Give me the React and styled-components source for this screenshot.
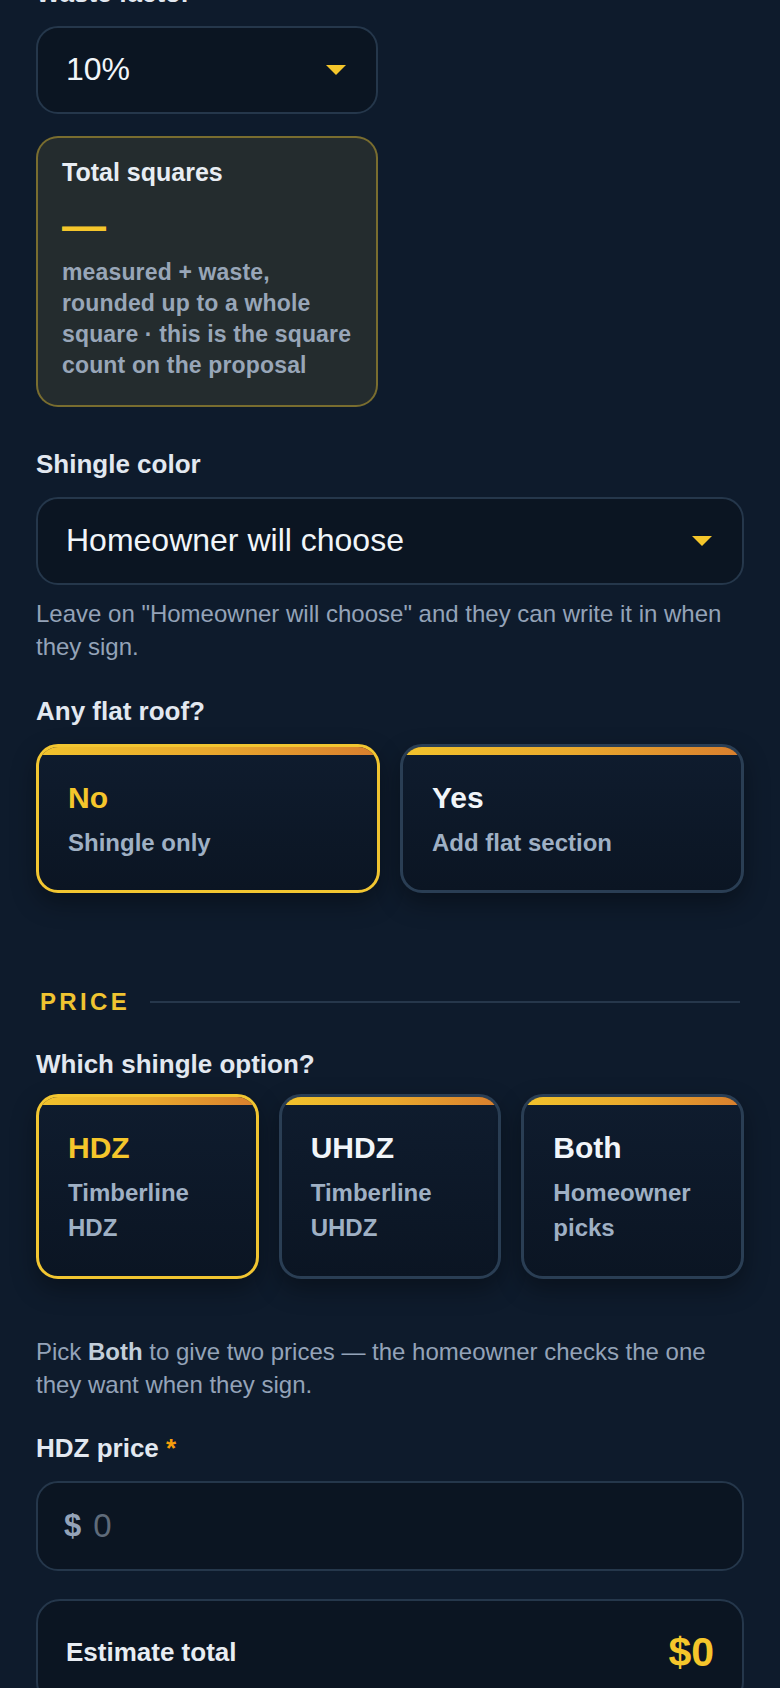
import styled, { createGlobalStyle } from "styled-components";

const GlobalStyle = createGlobalStyle`
  body {
    margin: 0;
    background: #0e1b2c;
    font-family: "Liberation Sans", Arial, sans-serif;
    color: #e2e8f0;
  }
`;

const Page = styled.div`
  margin-top: -24px;
  padding: 0 36px 40px;
`;

const Label = styled.div`
  font-size: 26px;
  font-weight: 700;
  line-height: 34px;
  color: #e2e8f0;
  margin: ${(p) => p.$top || 0}px 0 ${(p) => p.$bottom ?? 16}px;

  span {
    color: #f59e0b;
  }
`;

const HalfGrid = styled.div`
  display: grid;
  grid-template-columns: 1fr 1fr;
  column-gap: 24px;
`;

const Select = styled.div`
  box-sizing: border-box;
  height: 88px;
  display: flex;
  align-items: center;
  justify-content: space-between;
  padding: 0 30px 2px 28px;
  background: #0b1522;
  border: 2px solid #25374b;
  border-radius: 22px;
  font-size: 32px;
  color: #f1f5f9;

  svg {
    margin-top: 2px;
  }
`;

const Caret = () => (
  <svg width="20" height="10" viewBox="0 0 20 10">
    <path d="M0 0h20L10 10z" fill="#f5c62b" />
  </svg>
);

const SummaryCard = styled.div`
  margin-top: 22px;
  padding: 19px 22px 24px 24px;
  border: 2px solid rgba(240, 200, 50, 0.42);
  border-radius: 22px;
  background: #242c2e;
`;

const SummaryTitle = styled.div`
  font-size: 25px;
  font-weight: 700;
  line-height: 31px;
  color: #e8edf3;
`;

const SummaryValue = styled.div`
  margin-top: 16px;
  font-size: 44px;
  font-weight: 700;
  line-height: 44px;
  color: #f5c62b;
`;

const SummaryNote = styled.div`
  margin-top: 9px;
  font-size: 23px;
  font-weight: 700;
  line-height: 31px;
  letter-spacing: 0.15px;
  color: #98a6b8;
`;

const Help = styled.p`
  margin: ${(p) => p.$top}px 0 0;
  font-size: 24px;
  line-height: 33.3px;
  color: #94a3b8;

  b {
    color: #c3ceda;
  }
`;

const OptionGrid = styled.div`
  display: grid;
  grid-template-columns: repeat(${(p) => p.$cols}, 1fr);
  gap: 20px;
`;

const OptionCard = styled.div`
  position: relative;
  overflow: hidden;
  padding: 33px 28px 30px 29px;
  border: 3px solid ${(p) => (p.$active ? "#f2c631" : "#2a3e54")};
  border-radius: 22px;
  background: linear-gradient(180deg, #0f1c2e 0%, #0b1523 100%);
  box-shadow: 0 10px 24px rgba(0, 0, 0, 0.35);

  &::before {
    content: "";
    position: absolute;
    top: 0;
    left: 0;
    right: 0;
    height: 8px;
    background: linear-gradient(90deg, #f1c22c 0%, #e9a92d 50%, #d97f2e 100%);
  }
`;

const OptionTitle = styled.div`
  font-size: 30px;
  font-weight: 700;
  line-height: 36px;
  color: ${(p) => (p.$active ? "#f5c62b" : "#f1f5f9")};
`;

const OptionSub = styled.div`
  margin-top: 10px;
  font-size: 24px;
  font-weight: 700;
  line-height: 34.8px;
  color: #9fb0c4;
`;

const SectionHead = styled.div`
  display: flex;
  align-items: center;
  gap: 20px;
  margin-top: 94px;
  padding: 0 4px;
`;

const SectionTitle = styled.div`
  font-size: 24px;
  font-weight: 700;
  line-height: 30px;
  letter-spacing: 0.14em;
  color: #f0c431;
`;

const SectionRule = styled.div`
  flex: 1;
  height: 2px;
  background: #26374b;
`;

const PriceInput = styled.div`
  box-sizing: border-box;
  height: 90px;
  display: flex;
  align-items: center;
  gap: 12px;
  padding: 0 26px;
  background: #0b1522;
  border: 2px solid #25374b;
  border-radius: 22px;
`;

const Dollar = styled.span`
  font-size: 31px;
  font-weight: 700;
  color: #94a3b8;
`;

const Placeholder = styled.span`
  font-size: 33px;
  color: #5f6b7a;
`;

const TotalCard = styled.div`
  margin-top: 28px;
  padding: 31px 28px 32px 28px;
  background: #0b1522;
  border: 2px solid #25374b;
  border-radius: 24px;
`;

const TotalRow = styled.div`
  display: flex;
  align-items: center;
  justify-content: space-between;
`;

const TotalLabel = styled.div`
  font-size: 26px;
  font-weight: 700;
  line-height: 34px;
  color: #e8edf3;
`;

const TotalValue = styled.div`
  font-size: 41px;
  font-weight: 700;
  line-height: 40px;
  color: #f5c62b;
`;

const flatOptions = [
  { title: "No", sub: "Shingle only", active: true },
  { title: "Yes", sub: "Add flat section" },
];

const shingleOptions = [
  { title: "HDZ", sub: "Timberline HDZ", active: true },
  { title: "UHDZ", sub: "Timberline UHDZ" },
  { title: "Both", sub: "Homeowner picks" },
];

export default function App() {
  return (
    <>
      <GlobalStyle />
      <Page>
        <HalfGrid>
          <div>
            <Label>Waste factor</Label>
            <Select>
              <span>10%</span>
              <Caret />
            </Select>
            <SummaryCard>
              <SummaryTitle>Total squares</SummaryTitle>
              <SummaryValue>—</SummaryValue>
              <SummaryNote>
                measured + waste, rounded up to a whole square · this is the
                square count on the proposal
              </SummaryNote>
            </SummaryCard>
          </div>
        </HalfGrid>

        <Label $top={40}>Shingle color</Label>
        <Select>
          <span>Homeowner will choose</span>
          <Caret />
        </Select>
        <Help $top={12}>
          Leave on "Homeowner will choose" and they can write it in when they
          sign.
        </Help>

        <Label $top={30}>Any flat roof?</Label>
        <OptionGrid $cols={2}>
          {flatOptions.map((o) => (
            <OptionCard key={o.title} $active={o.active}>
              <OptionTitle $active={o.active}>{o.title}</OptionTitle>
              <OptionSub>{o.sub}</OptionSub>
            </OptionCard>
          ))}
        </OptionGrid>

        <SectionHead>
          <SectionTitle>PRICE</SectionTitle>
          <SectionRule />
        </SectionHead>

        <Label $top={30} $bottom={13}>
          Which shingle option?
        </Label>
        <OptionGrid $cols={3}>
          {shingleOptions.map((o) => (
            <OptionCard key={o.title} $active={o.active}>
              <OptionTitle $active={o.active}>{o.title}</OptionTitle>
              <OptionSub>{o.sub}</OptionSub>
            </OptionCard>
          ))}
        </OptionGrid>
        <Help $top={56}>
          Pick <b>Both</b> to give two prices — the homeowner checks the one
          they want when they sign.
        </Help>

        <Label $top={29}>
          HDZ price <span>*</span>
        </Label>
        <PriceInput>
          <Dollar>$</Dollar>
          <Placeholder>0</Placeholder>
        </PriceInput>

        <TotalCard>
          <TotalRow>
            <TotalLabel>Estimate total</TotalLabel>
            <TotalValue>$0</TotalValue>
          </TotalRow>
        </TotalCard>
      </Page>
    </>
  );
}
